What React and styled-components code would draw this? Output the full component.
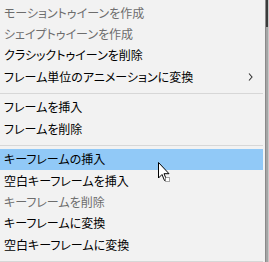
import React from "react";
import styled, { createGlobalStyle } from "styled-components";

const GlobalStyle = createGlobalStyle`
  html, body { margin: 0; padding: 0; background: #f2f2f2; }
  body { font-family: "Noto Sans CJK JP", "Noto Sans", sans-serif; }
`;

const Frame = styled.div`
  position: relative;
  display: flex;
  width: 269px;
  height: 262px;
  overflow: hidden;
`;

const Menu = styled.div`
  width: 265px;
  box-sizing: border-box;
  padding: 2px 2px 0 0;
  background: #f2f2f2;
  display: flex;
  flex-direction: column;
  flex-shrink: 0;
`;

const Item = styled.div`
  height: 21.33px;
  flex-shrink: 0;
  display: flex;
  align-items: center;
  justify-content: space-between;
  padding: 0 10px 0 4px;
  font-size: 12px;
  font-feature-settings: "palt";
  line-height: 1;
  white-space: nowrap;
  color: ${(p) => (p.$disabled ? "#6d6d6d" : "#000")};
  background: ${(p) => (p.$active ? "#91c9f7" : "transparent")};
`;

const Separator = styled.div`
  height: 1px;
  flex-shrink: 0;
  background: #d7d7d7;
  margin: 5.33px 0 3px;
`;

const Edge = styled.div`
  width: 4px;
  display: flex;
  flex-shrink: 0;
`;

const EdgeLine = styled.div`
  width: ${(p) => p.$w}px;
  background: ${(p) => p.$c};
`;

const EdgeBar = styled.div`
  width: 2px;
  display: flex;
  flex-direction: column;
`;

const EdgeThumb = styled.div`
  height: 27px;
  background: #3b3b3b;
`;

const EdgeTrack = styled.div`
  flex: 1;
  background: #a5a5a5;
`;

const Cursor = styled.svg`
  position: absolute;
  left: 158px;
  top: 162px;
`;

const Chevron = () => (
  <svg width="5" height="8" viewBox="0 0 5 8">
    <path d="M1 0.5 L4 4 L1 7.5" fill="none" stroke="#333" strokeWidth="1.1" />
  </svg>
);

const items = [
  { t: "モーショントゥイーンを作成", d: true },
  { t: "シェイプトゥイーンを作成", d: true },
  { t: "クラシックトゥイーンを削除" },
  { t: "フレーム単位のアニメーションに変換", sub: true },
  "sep",
  { t: "フレームを挿入" },
  { t: "フレームを削除" },
  "sep",
  { t: "キーフレームの挿入", a: true },
  { t: "空白キーフレームを挿入" },
  { t: "キーフレームを削除", d: true },
  { t: "キーフレームに変換" },
  { t: "空白キーフレームに変換" },
  "sep",
];

export default function App() {
  return (
    <>
      <GlobalStyle />
      <Frame>
        <Menu>
          {items.map((it, i) =>
            it === "sep" ? (
              <Separator key={i} />
            ) : (
              <Item key={i} $disabled={it.d} $active={it.a}>
                <span>{it.t}</span>
                {it.sub && <Chevron />}
              </Item>
            )
          )}
        </Menu>
        <Edge>
          <EdgeLine $w={1} $c="#8a8a8a" />
          <EdgeBar>
            <EdgeThumb />
            <EdgeTrack />
          </EdgeBar>
          <EdgeLine $w={1} $c="#c8c8c8" />
        </Edge>
        <Cursor width="14" height="21" viewBox="0 0 14 21">
          <path
            d="M0.5 0.5 L0.5 16 L4 12.5 L6.5 18.5 L8.5 17.6 L6 11.7 L11 11.7 Z"
            fill="#fff"
            stroke="#000"
            strokeWidth="1"
            strokeLinejoin="miter"
          />
          <rect x="7.5" y="15.5" width="4" height="4" fill="#fff" stroke="#555" strokeWidth="1" strokeDasharray="1 1" />
        </Cursor>
      </Frame>
    </>
  );
}
